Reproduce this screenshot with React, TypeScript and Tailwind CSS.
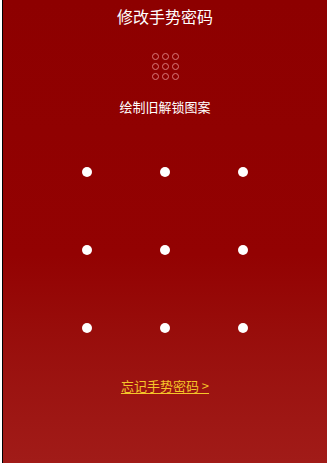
import React from 'react';

const dots = [0, 1, 2, 3, 4, 5, 6, 7, 8];

export default function App() {
    return (
        <div className="w-[330px] h-[463px] bg-white flex" style={{ fontFamily: '"Noto Sans CJK SC", "Noto Sans", sans-serif' }}>
            <div className="ml-[2px] w-[325px] h-full border-l border-black bg-gradient-to-b from-[#8d0000] from-0% via-[#930202] via-55% to-[#a11b18] flex flex-col items-center">
                <h1 className="mt-[4px] h-[24px] leading-[24px] text-[16px] text-white">修改手势密码</h1>

                {/* small pattern preview */}
                <div className="mt-[25px] grid grid-cols-3 gap-[3px]">
                    {dots.map((d) => (
                        <div key={d} className="w-[7px] h-[7px] rounded-full border border-[#d9787a]" />
                    ))}
                </div>

                <p className="mt-[18px] text-[13px] leading-[18px] text-white">绘制旧解锁图案</p>

                {/* gesture grid */}
                <div className="mt-[51px] grid grid-cols-3 gap-x-[68px] gap-y-[68px]">
                    {dots.map((d) => (
                        <div key={d} className="w-[10px] h-[10px] rounded-full bg-white" />
                    ))}
                </div>

                <a className="mt-[44px] text-[13px] leading-[18px] text-[#f5c52a] underline underline-offset-2">忘记手势密码 &gt;</a>
            </div>
        </div>
    );
}
